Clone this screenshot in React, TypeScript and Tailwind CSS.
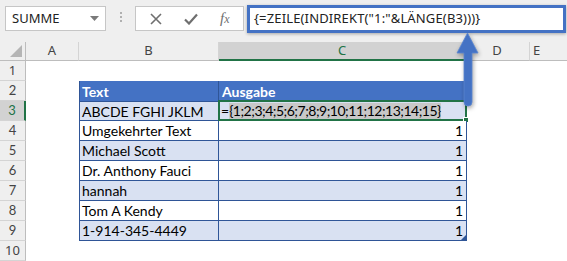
import React from 'react';

const cellFont = { fontFamily: 'Lato, "Open Sans", sans-serif' };

const rows = [
  { n: 3, text: 'ABCDE FGHI JKLM', band: true },
  { n: 4, text: 'Umgekehrter Text', band: false },
  { n: 5, text: 'Michael Scott', band: true },
  { n: 6, text: 'Dr. Anthony Fauci', band: false },
  { n: 7, text: 'hannah', band: true },
  { n: 8, text: 'Tom A Kendy', band: false },
  { n: 9, text: '1-914-345-4449', band: true },
];

function RowHead({ n, active }: { n: number; active?: boolean }) {
  return (
    <div
      className={`w-[26px] shrink-0 flex items-center justify-center border-b border-[#d4d4d4] text-[13px] ${
        active
          ? 'bg-[#d2d2d2] text-[#217346] border-r-2 border-r-[#217346]'
          : 'bg-[#efefef] text-[#444] border-r border-r-[#bdbdbd]'
      }`}
    >
      {n}
    </div>
  );
}

export default function App() {
  return (
    <div
      className="relative w-[567px] h-[261px] overflow-hidden bg-white"
      style={{ fontFamily: '"Noto Sans", "Open Sans", sans-serif' }}
    >
      {/* formula bar */}
      <div className="h-[42px] bg-[#efefef] flex items-start pt-[6px]">
        <div className="ml-[5px] w-[101px] h-[25px] bg-white border border-[#c6c6c6] flex items-center justify-between pl-[6px] pr-[6px]">
          <span className="text-[13px] text-[#222]">SUMME</span>
          <svg width="9" height="6" viewBox="0 0 9 6">
            <polygon points="0,0 9,0 4.5,5" fill="#7a7a7a" />
          </svg>
        </div>
        <div className="ml-[14px] mt-[6px] flex flex-col gap-[2px]">
          <span className="w-[2px] h-[2px] bg-[#b0b0b0]" />
          <span className="w-[2px] h-[2px] bg-[#b0b0b0]" />
          <span className="w-[2px] h-[2px] bg-[#b0b0b0]" />
        </div>
        <div className="ml-[13px] w-[109px] h-[25px] bg-white border border-[#c6c6c6] flex items-center pl-[14px]">
          <svg width="12" height="12" viewBox="0 0 12 12">
            <path d="M1 1 L11 11 M11 1 L1 11" stroke="#6f6f6f" strokeWidth="1.6" />
          </svg>
          <svg className="ml-[22px]" width="14" height="12" viewBox="0 0 14 12">
            <path d="M1 6.5 L5 10.5 L13 1.5" stroke="#6f6f6f" strokeWidth="2.2" fill="none" />
          </svg>
          <span
            className="ml-[22px] text-[15px] italic text-[#6f6f6f] leading-none"
            style={{ fontFamily: '"Liberation Serif", serif' }}
          >
            f<span className="text-[12px]">x</span>
          </span>
        </div>
        <div className="ml-[3px] -mt-[1px] flex-1 mr-[1px] h-[28px] bg-white border-[3px] border-[#4472c4] flex items-center pl-[4px] shadow-[0_1px_3px_rgba(0,0,0,0.3)]">
          <span className="text-[13px] text-[#222] tracking-[0.15px]">{'{=ZEILE(INDIREKT("1:"&LÄNGE(B3)))}'}</span>
        </div>
      </div>

      {/* column headers */}
      <div className="h-[19px] flex text-[13px] text-[#444] bg-[#efefef]">
        <div className="w-[26px] shrink-0 border-r border-b border-[#bdbdbd] relative">
          <svg className="absolute right-[3px] bottom-[3px]" width="12" height="12" viewBox="0 0 12 12">
            <polygon points="12,0 12,12 0,12" fill="#b5b5b5" />
          </svg>
        </div>
        <div className="w-[53px] shrink-0 flex items-center justify-center border-r border-b border-[#d4d4d4] border-b-[#bdbdbd]">A</div>
        <div className="w-[140px] shrink-0 flex items-center justify-center border-r border-b border-[#d4d4d4] border-b-[#bdbdbd]">B</div>
        <div className="w-[246px] shrink-0 flex items-center justify-center bg-[#d2d2d2] text-[#217346] border-b-2 border-[#217346]">C</div>
        <div className="w-[65px] shrink-0 flex items-center justify-center border-r border-b border-[#d4d4d4] border-b-[#bdbdbd]">D</div>
        <div className="flex-1 flex items-center pl-[3px] border-b border-[#bdbdbd]">E</div>
      </div>

      {/* row 1 */}
      <div className="h-[20px] flex">
        <RowHead n={1} />
      </div>

      {/* row 2: table header */}
      <div className="h-[20px] flex" style={cellFont}>
        <RowHead n={2} />
        <div className="w-[53px] shrink-0" />
        <div className="w-[140px] shrink-0 bg-[#4472c4] border-l border-r border-[#2f5597] flex items-center pl-[2px] text-[14px] font-bold text-white">
          Text
        </div>
        <div className="w-[248px] shrink-0 bg-[#4472c4] border-r border-[#2f5597] flex items-center pl-[3px] text-[14px] font-bold text-white">
          Ausgabe
        </div>
      </div>

      {rows.map((r) => (
        <div key={r.n} className="h-[20px] flex" style={cellFont}>
          <RowHead n={r.n} active={r.n === 3} />
          <div className="w-[53px] shrink-0" />
          <div
            className={`w-[140px] shrink-0 border-l border-r border-b border-[#2f5597] flex items-center pl-[2px] text-[14px] text-black ${
              r.band ? 'bg-[#d9e1f2]' : 'bg-white'
            } ${r.n === 3 ? 'border-t' : ''}`}
          >
            {r.text}
          </div>
          <div
            className={`relative w-[248px] shrink-0 border-r border-b border-[#2f5597] flex items-center text-[14px] text-black ${
              r.band ? 'bg-[#d9e1f2]' : 'bg-white'
            } ${r.n === 3 ? 'justify-start pl-[2px]' : 'justify-end pr-[3px]'}`}
          >
            {r.n === 3 ? (
              <>
                <span>=</span>
                <span className="bg-[#c8c8c8] leading-[16px] tracking-[-0.5px]">{'{1;2;3;4;5;6;7;8;9;10;11;12;13;14;15}'}</span>
                <div className="absolute -left-[1px] -top-[1px] -right-[1px] -bottom-[1px] border-2 border-[#217346]" />
                <div className="absolute -right-[3px] -bottom-[3px] w-[6px] h-[6px] bg-[#217346] border border-white" />
              </>
            ) : (
              <span>1</span>
            )}
            {r.n === 9 && (
              <svg className="absolute right-0 bottom-0" width="5" height="5" viewBox="0 0 5 5">
                <polygon points="5,0 5,5 0,5" fill="#2f5597" />
              </svg>
            )}
          </div>
        </div>
      ))}

      {/* row 10 */}
      <div className="h-[20px] flex">
        <RowHead n={10} />
      </div>

      {/* callout arrow */}
      <svg
        className="absolute left-[455px] top-[32px] drop-shadow-[1px_2px_2px_rgba(0,0,0,0.35)]"
        width="26"
        height="76"
        viewBox="0 0 26 76"
      >
        <path
          d="M12.5 1 L23 21 L17 21 L17 70 Q17 74 13 74 Q9 74 9 70 L9 21 L2 21 Z"
          fill="#4472c4"
          stroke="#5b86d0"
          strokeWidth="0.8"
        />
      </svg>
    </div>
  );
}
